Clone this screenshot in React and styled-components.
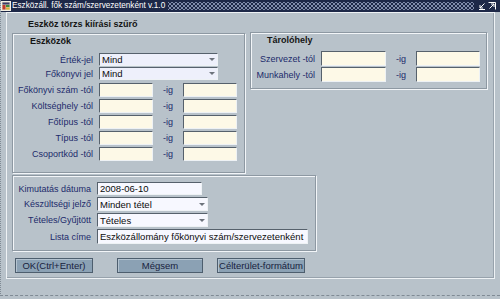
import React from "react";
import styled, { createGlobalStyle } from "styled-components";

const Global = createGlobalStyle`
  html, body { margin: 0; padding: 0; background: #b8c2ca; }
  body { font-family: "Liberation Sans", Arial, sans-serif; }
`;

const Window = styled.div`
  width: 499px;
  height: 295px;
  background: #b8c2ca;
  border-left: 1px dotted #7f8a94;
  border-bottom: 1px dashed #7f8a94;
  font-size: 9px;
  color: #1c2a6a;
  overflow: hidden;
`;

const TitleBar = styled.div`
  height: 12px;
  display: flex;
  align-items: center;
  background: #1d2848;
`;

const TitleIcon = styled.svg`
  width: 10px;
  height: 10px;
  flex: none;
`;

const TitleText = styled.div`
  color: #ffffff;
  font-size: 8.2px;
  line-height: 12px;
  padding: 0 3px 0 1px;
  white-space: nowrap;
`;

const Dots = styled.div`
  flex: 1;
  height: 8px;
  background-image:
    radial-gradient(circle, #8390ae 0.7px, transparent 0.9px),
    radial-gradient(circle, #8390ae 0.7px, transparent 0.9px);
  background-size: 4px 4px;
  background-position: 0 0, 2px 2px;
`;

const TitleButtons = styled.div`
  display: flex;
  gap: 2px;
  padding: 0 4px 0 4px;
`;

const Body = styled.div`
  padding: 0 5px 0 5px;
`;

const Panel = styled.div`
  height: 267px;
  box-sizing: border-box;
  border: 1px solid #eef2f5;
  box-shadow: inset -1px -1px 0 #97a2ac;
  padding: 0 0 0 5px;
  display: flex;
  flex-direction: column;
`;

const PanelHeading = styled.div`
  height: 14px;
  line-height: 14px;
  padding: 4px 0 1px 16px;
  font-weight: bold;
  color: #141414;
`;

const TopRow = styled.div`
  display: flex;
  align-items: flex-start;
  gap: 5px;
`;

const Group = styled.div`
  box-sizing: border-box;
  width: ${(p) => p.$w}px;
  height: ${(p) => p.$h}px;
  margin-top: ${(p) => p.$top || 0}px;
  border: 1px solid #8d98a2;
  box-shadow: inset 1px 1px 0 #f2f5f8, 1px 1px 0 #f2f5f8;
  display: flex;
  flex-direction: column;
`;

const GroupTitle = styled.div`
  height: 14px;
  line-height: 14px;
  padding-left: ${(p) => p.$indent}px;
  font-weight: bold;
  color: #141414;
`;

const Rows = styled.div`
  display: flex;
  flex-direction: column;
  gap: ${(p) => p.$gap}px;
  margin-top: ${(p) => p.$top}px;
`;

const Row = styled.div`
  display: flex;
  align-items: center;
  height: ${(p) => p.$h}px;
`;

const Label = styled.div`
  width: ${(p) => p.$w}px;
  margin-right: ${(p) => p.$gap}px;
  text-align: right;
  white-space: nowrap;
  color: #1c2a6a;
`;

const Field = styled.div`
  box-sizing: border-box;
  width: ${(p) => p.$w}px;
  height: 100%;
  background: ${(p) => p.$bg || "#fdf9e7"};
  border-top: 1px solid #56616c;
  border-left: 1px solid #56616c;
  border-right: 1px solid #eef2f5;
  border-bottom: 1px solid #eef2f5;
  padding-left: 2px;
  color: #0c0c0c;
  font-size: 9.5px;
  display: flex;
  align-items: center;
  white-space: nowrap;
  overflow: hidden;
`;

const SelectBox = styled(Field)`
  background: ${(p) => p.$bg || "#eef0fb"};
  justify-content: space-between;
  padding-right: 0;
`;

const Arrow = styled.span`
  width: 10px;
  height: 100%;
  display: flex;
  align-items: center;
  justify-content: center;
  flex: none;
  &::after {
    content: "";
    border-left: 3px solid transparent;
    border-right: 3px solid transparent;
    border-top: 3px solid #6d737c;
  }
`;

const Ig = styled.div`
  width: 30px;
  text-align: center;
  color: #1c2a6a;
`;

const ButtonRow = styled.div`
  display: flex;
  margin: 7px 0 0 3px;
`;

const Button = styled.div`
  box-sizing: border-box;
  width: ${(p) => p.$w}px;
  height: 15px;
  margin-right: ${(p) => p.$gap || 0}px;
  background: #8ba1b4;
  border: 1px solid #4d5e6e;
  box-shadow: inset 1px 1px 0 #b4c3d0;
  color: #18223e;
  font-size: 9.5px;
  display: flex;
  align-items: center;
  justify-content: center;
  white-space: nowrap;
`;

const Select = ({ w, bg, children }) => (
  <SelectBox $w={w} $bg={bg}>
    <span>{children}</span>
    <Arrow />
  </SelectBox>
);

const RangeRow = ({ label, lw, lgap, w1, w2, h }) => (
  <Row $h={h}>
    <Label $w={lw} $gap={lgap}>{label}</Label>
    <Field $w={w1} />
    <Ig>-ig</Ig>
    <Field $w={w2} />
  </Row>
);

const eszkozRanges = [
  "Főkönyvi szám -tól",
  "Költséghely -tól",
  "Főtípus -tól",
  "Típus -tól",
  "Csoportkód -tól",
];

const App = () => (
  <>
    <Global />
    <Window>
      <TitleBar>
        <TitleIcon viewBox="0 0 10 10">
          <rect x="0.5" y="0.5" width="9" height="9" fill="#d8d0b8" stroke="#f4f0e4" />
          <rect x="1.5" y="1.5" width="7" height="2" fill="#3a3a6a" />
          <rect x="1.5" y="4" width="3" height="4.5" fill="#c23a2a" />
          <rect x="5" y="4" width="3.5" height="2" fill="#3c8a3c" />
          <rect x="5" y="6.5" width="3.5" height="2" fill="#e0b030" />
        </TitleIcon>
        <TitleText>Eszközáll. fők szám/szervezetenként v.1.0</TitleText>
        <Dots />
        <TitleButtons>
          <svg width="8" height="8" viewBox="0 0 8 8">
            <path d="M6.5 1.5 L2 6 M2 3 L2 6 L5 6 M1 7.5 L7 7.5" stroke="#ffffff" strokeWidth="1" fill="none" />
          </svg>
          <svg width="8" height="8" viewBox="0 0 8 8">
            <path d="M0.5 0.5 L7.5 0.5 L7.5 7.5 M6 2 L1.5 6.5 M3 2 L6 2 L6 5" stroke="#ffffff" strokeWidth="1" fill="none" />
          </svg>
        </TitleButtons>
      </TitleBar>
      <Body>
        <Panel>
          <PanelHeading>Eszköz törzs kiírási szűrő</PanelHeading>
          <TopRow>
            <Group $w={233} $h={140} $top={1}>
              <GroupTitle $indent={17}>Eszközök</GroupTitle>
              <Rows $gap={1} $top={5}>
                <Row $h={13}>
                  <Label $w={80} $gap={6}>Érték-jel</Label>
                  <Select w={119}>Mind</Select>
                </Row>
                <Row $h={13}>
                  <Label $w={80} $gap={6}>Főkönyvi jel</Label>
                  <Select w={119}>Mind</Select>
                </Row>
              </Rows>
              <Rows $gap={2} $top={3}>
                {eszkozRanges.map((l) => (
                  <RangeRow key={l} label={l} lw={80} lgap={6} w1={54} w2={54} h={14} />
                ))}
              </Rows>
            </Group>
            <Group $w={237} $h={57}>
              <GroupTitle $indent={16}>Tárolóhely</GroupTitle>
              <Rows $gap={1} $top={4}>
                <RangeRow label="Szervezet -tól" lw={64} lgap={6} w1={65} w2={64} h={15} />
                <RangeRow label="Munkahely -tól" lw={64} lgap={6} w1={65} w2={64} h={15} />
              </Rows>
            </Group>
          </TopRow>
          <Group $w={304} $h={76} $top={2}>
            <Rows $gap={2} $top={6}>
              <Row $h={13}>
                <Label $w={78} $gap={6}>Kimutatás dátuma</Label>
                <Field $w={105} $bg="#f7f8ff">2008-06-10</Field>
              </Row>
              <Row $h={14}>
                <Label $w={78} $gap={6}>Készültségi jelző</Label>
                <Select w={111} bg="#f7f8ff">Minden tétel</Select>
              </Row>
              <Row $h={14}>
                <Label $w={78} $gap={6}>Tételes/Gyűjtött</Label>
                <Select w={111} bg="#f7f8ff">Tételes</Select>
              </Row>
              <Row $h={15}>
                <Label $w={78} $gap={6}>Lista címe</Label>
                <Field $w={211} $bg="#f7f8ff">Eszközállomány főkönyvi szám/szervezetenként</Field>
              </Row>
            </Rows>
          </Group>
          <ButtonRow>
            <Button $w={78} $gap={24}>OK(Ctrl+Enter)</Button>
            <Button $w={86} $gap={14}>Mégsem</Button>
            <Button $w={88}>Célterület-formátum</Button>
          </ButtonRow>
        </Panel>
      </Body>
    </Window>
  </>
);

export default App;
